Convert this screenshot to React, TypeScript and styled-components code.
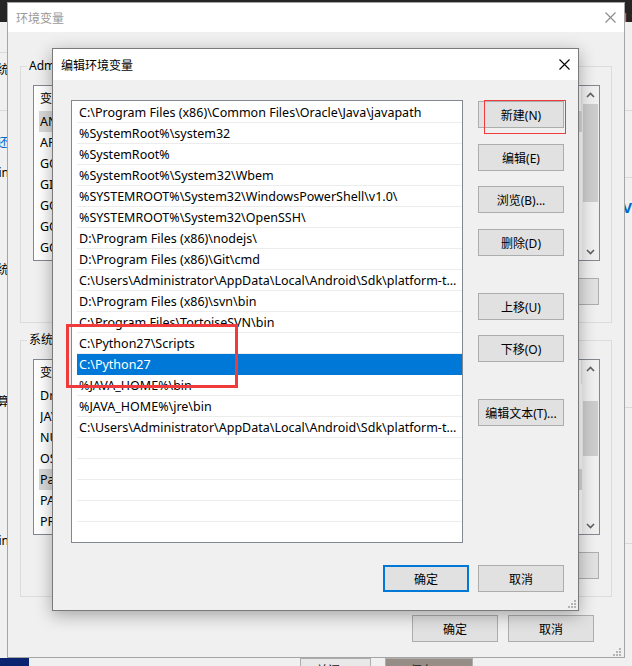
import React from "react";
import styled, { createGlobalStyle } from "styled-components";

const FONT = `"Noto Sans", "Noto Sans CJK SC", sans-serif`;

const GlobalStyle = createGlobalStyle`
  html, body { margin: 0; padding: 0; background: #f0f0f0; }
  body { font-family: ${FONT}; font-size: 12px; }
  * { box-sizing: border-box; }
`;

const Desktop = styled.div`
  position: relative;
  width: 632px;
  height: 666px;
  overflow: hidden;
  background: #f0f0f0;
  font-family: ${FONT};
  font-size: 12px;
  color: #000;
`;

/* ---------- windows on the desktop ---------- */
const Win = styled.div<{ $x: number; $y: number; $w: number; $h: number }>`
  position: absolute;
  left: ${(p) => p.$x}px;
  top: ${(p) => p.$y}px;
  width: ${(p) => p.$w}px;
  height: ${(p) => p.$h}px;
  overflow: hidden;
`;

const EditorWin = styled(Win)`
  background: #252526;
`;

const CodeLine = styled.div`
  margin-top: 12px;
  padding-left: 340px;
  white-space: nowrap;
  font-family: "DejaVu Sans Mono", monospace;
  font-size: 12px;
  line-height: 14px;
  color: #d4d4d4;
`;

const Tok = styled.span<{ $c: string }>`
  color: ${(p) => p.$c};
`;

const SystemWin = styled(Win)`
  background: #f0f0f0;
  display: flex;
  justify-content: space-between;
`;

const SidePane = styled.div<{ $w: number }>`
  width: ${(p) => p.$w}px;
  display: flex;
  flex-direction: column;
  align-items: flex-end;
`;

const SideSep = styled.div<{ $mt: number }>`
  margin-top: ${(p) => p.$mt}px;
  width: 100%;
  height: 1px;
  background: #d9d9d9;
  flex: none;
`;

const SideText = styled.div<{ $mt: number; $color?: string; $bold?: boolean }>`
  margin-top: ${(p) => p.$mt}px;
  line-height: 16px;
  height: 16px;
  white-space: nowrap;
  color: ${(p) => p.$color ?? "#000"};
  font-weight: ${(p) => (p.$bold ? 700 : 400)};
  font-size: ${(p) => (p.$bold ? 15 : 12)}px;
  flex: none;
`;

const BottomStrip = styled(Win)`
  display: flex;
  background: #f0f0f0;
`;

const NavyBlock = styled.div`
  width: 29px;
  background: #0b2470;
`;

const StripButton = styled.div<{ $ml: number; $w: number; $bg: string }>`
  margin-left: ${(p) => p.$ml}px;
  width: ${(p) => p.$w}px;
  height: 20px;
  background: ${(p) => p.$bg};
  border: 1px solid #adadad;
  text-align: center;
  line-height: 18px;
  padding-top: 3px;
  font-size: 12px;
  color: #222;
`;

const DialogWin = styled(Win)<{ $active?: boolean }>`
  background: #f0f0f0;
  border: 1px solid ${(p) => (p.$active ? "#7a7a7a" : "#a5a5a5")};
  display: flex;
  flex-direction: column;
  ${(p) => (p.$active ? "box-shadow: 0 4px 16px rgba(0,0,0,0.32);" : "")}
`;

const TitleBar = styled.div<{ $h: number }>`
  height: ${(p) => p.$h}px;
  flex: none;
  background: #fff;
  display: flex;
  align-items: center;
  justify-content: space-between;
  padding: 0 8px;
`;

const TitleText = styled.div<{ $inactive?: boolean }>`
  font-size: 12px;
  color: ${(p) => (p.$inactive ? "#9a9a9a" : "#000")};
`;

const CloseGlyph = styled.svg`
  display: block;
`;

function CloseIcon({ color }: { color: string }) {
  return (
    <CloseGlyph width="11" height="11" viewBox="0 0 11 11">
      <path d="M0.5 0.5 L10.5 10.5 M10.5 0.5 L0.5 10.5" stroke={color} strokeWidth="1.1" fill="none" />
    </CloseGlyph>
  );
}

const Grip = styled.svg<{ $r: number; $b: number }>`
  position: absolute;
  right: ${(p) => p.$r}px;
  bottom: ${(p) => p.$b}px;
`;

function GripIcon({ r, b }: { r: number; b: number }) {
  return (
    <Grip $r={r} $b={b} width="8" height="8" viewBox="0 0 8 8">
      {[
        [6, 0],
        [3, 3],
        [6, 3],
        [0, 6],
        [3, 6],
        [6, 6],
      ].map(([x, y]) => (
        <rect key={`${x}-${y}`} x={x} y={y} width="2" height="2" fill="#b4b4b4" />
      ))}
    </Grip>
  );
}

/* ---------- buttons ---------- */
const Button = styled.div<{ $default?: boolean; $mt?: number; $w?: number }>`
  width: ${(p) => p.$w ?? 86}px;
  height: 27px;
  flex: none;
  margin-top: ${(p) => p.$mt ?? 0}px;
  background: #e1e1e1;
  border: ${(p) => (p.$default ? "2px solid #0078d7" : "1px solid #adadad")};
  display: flex;
  align-items: center;
  justify-content: center;
  font-size: 12px;
  color: #000;
  white-space: nowrap;
`;

/* ---------- background dialog (环境变量) ---------- */
const BgBody = styled.div`
  flex: 1;
  display: flex;
  flex-direction: column;
  padding: 0 0 0 12px;
`;

const Group = styled.fieldset<{ $mt: number }>`
  margin: ${(p) => p.$mt}px 0 0 0;
  width: 592px;
  padding: 11px 11px 17px 12px;
  border: 1px solid #dcdcdc;
  min-width: 0;
`;

const GroupLabel = styled.legend`
  padding: 0 2px;
  margin-left: -6px;
  font-size: 12px;
  line-height: 16px;
  white-space: nowrap;
`;

const ListView = styled.div`
  width: 567px;
  height: 176px;
  border: 1px solid #828790;
  background: #fff;
  display: flex;
  overflow: hidden;
`;

const LvContent = styled.div`
  flex: 1;
  display: flex;
  flex-direction: column;
  overflow: hidden;
`;

const LvHeader = styled.div`
  height: 25px;
  flex: none;
  display: flex;
  align-items: center;
  padding-left: 6px;
  border-bottom: 1px solid #fff;
`;

const HeaderCell = styled.div<{ $w: number }>`
  width: ${(p) => p.$w}px;
  height: 100%;
  display: flex;
  align-items: center;
  border-right: 1px solid #e5e5e5;
`;

const LvRow = styled.div<{ $sel?: boolean }>`
  height: 21px;
  flex: none;
  margin-left: 5px;
  padding-left: 1px;
  display: flex;
  align-items: center;
  white-space: nowrap;
  font-size: 12.5px;
  background: ${(p) => (p.$sel ? "#d9d9d9" : "transparent")};
`;

const Cell = styled.div<{ $w: number }>`
  width: ${(p) => p.$w}px;
  overflow: hidden;
`;

const ScrollBar = styled.div`
  width: 17px;
  flex: none;
  background: #f0f0f0;
  display: flex;
  flex-direction: column;
`;

const ScrollBtn = styled.div`
  height: 17px;
  flex: none;
  display: flex;
  align-items: center;
  justify-content: center;
`;

const Track = styled.div`
  flex: 1;
  display: flex;
  flex-direction: column;
`;

const Thumb = styled.div<{ $mt: number; $h: number }>`
  margin: ${(p) => p.$mt}px 1px 0 1px;
  height: ${(p) => p.$h}px;
  background: #cdcdcd;
`;

function Chevron({ up }: { up?: boolean }) {
  return (
    <svg width="9" height="6" viewBox="0 0 9 6">
      <path
        d={up ? "M1 5 L4.5 1.5 L8 5" : "M1 1 L4.5 4.5 L8 1"}
        stroke="#606060"
        strokeWidth="1.6"
        fill="none"
      />
    </svg>
  );
}

const GroupButtons = styled.div`
  display: flex;
  justify-content: flex-end;
  gap: 10px;
  margin-top: 17px;
  padding-right: 1px;
`;

const BgFooter = styled.div`
  display: flex;
  justify-content: flex-end;
  gap: 10px;
  margin-top: 18px;
  padding-right: 30px;
`;

type LvProps = {
  names: string[];
  values: string[];
  sel: number;
  thumbTop: number;
  thumbH: number;
};

function EnvListView({ names, values, sel, thumbTop, thumbH }: LvProps) {
  return (
    <ListView>
      <LvContent>
        <LvHeader>
          <HeaderCell $w={150}>变量</HeaderCell>
          <HeaderCell $w={400}>值</HeaderCell>
        </LvHeader>
        {names.map((n, i) => (
          <LvRow key={n + i} $sel={i === sel}>
            <Cell $w={151}>{n}</Cell>
            <Cell $w={390}>{values[i]}</Cell>
          </LvRow>
        ))}
      </LvContent>
      <ScrollBar>
        <ScrollBtn>
          <Chevron up />
        </ScrollBtn>
        <Track>
          <Thumb $mt={thumbTop} $h={thumbH} />
        </Track>
        <ScrollBtn>
          <Chevron />
        </ScrollBtn>
      </ScrollBar>
    </ListView>
  );
}

/* ---------- foreground dialog (编辑环境变量) ---------- */
const FgBody = styled.div`
  flex: 1;
  display: flex;
  flex-direction: column;
  padding: 20px 14px 0 18px;
`;

const FgMain = styled.div`
  display: flex;
  justify-content: space-between;
`;

const PathList = styled.div`
  width: 392px;
  height: 443px;
  border: 1px solid #828790;
  background: #fff;
  padding: 1px 0 0 5px;
  overflow: hidden;
  display: flex;
  flex-direction: column;
`;

const PathRow = styled.div<{ $sel?: boolean }>`
  height: 21px;
  flex: none;
  padding: 1px 0 0 2px;
  line-height: 19px;
  font-size: 12.5px;
  border-bottom: 1px solid ${(p) => (p.$sel ? "#0078d7" : "#ececec")};
  background: ${(p) => (p.$sel ? "#0078d7" : "#fff")};
  color: ${(p) => (p.$sel ? "#fff" : "#000")};
  white-space: nowrap;
  overflow: hidden;
`;

const ButtonColumn = styled.div`
  display: flex;
  flex-direction: column;
`;

const FgFooter = styled.div`
  display: flex;
  justify-content: flex-end;
  gap: 9px;
  margin-top: 22px;
`;

/* ---------- annotation boxes ---------- */
const Annotation = styled.div<{ $x: number; $y: number; $w: number; $h: number; $t: number }>`
  position: absolute;
  left: ${(p) => p.$x}px;
  top: ${(p) => p.$y}px;
  width: ${(p) => p.$w}px;
  height: ${(p) => p.$h}px;
  border: ${(p) => p.$t}px solid #ef3b3b;
  pointer-events: none;
`;

const paths = [
  "C:\\Program Files (x86)\\Common Files\\Oracle\\Java\\javapath",
  "%SystemRoot%\\system32",
  "%SystemRoot%",
  "%SystemRoot%\\System32\\Wbem",
  "%SYSTEMROOT%\\System32\\WindowsPowerShell\\v1.0\\",
  "%SYSTEMROOT%\\System32\\OpenSSH\\",
  "D:\\Program Files (x86)\\nodejs\\",
  "D:\\Program Files (x86)\\Git\\cmd",
  "C:\\Users\\Administrator\\AppData\\Local\\Android\\Sdk\\platform-t...",
  "D:\\Program Files (x86)\\svn\\bin",
  "C:\\Program Files\\TortoiseSVN\\bin",
  "C:\\Python27\\Scripts",
  "C:\\Python27",
  "%JAVA_HOME%\\bin",
  "%JAVA_HOME%\\jre\\bin",
  "C:\\Users\\Administrator\\AppData\\Local\\Android\\Sdk\\platform-t...",
  "",
  "",
  "",
  "",
  "",
];

const userNames = ["ANDROID_HOME", "APPDATA_DIR", "GOPATH", "GIT_HOME", "GOROOT", "GOPROXY", "GO111MODULE"];
const userValues = [
  "C:\\Users\\Administrator\\AppData\\Local\\Android\\Sdk",
  "C:\\Users\\Administrator\\AppData",
  "C:\\Users\\Administrator\\go",
  "D:\\Program Files (x86)\\Git",
  "C:\\Go",
  "https://goproxy.cn",
  "on",
];
const sysNames = ["DriverData", "JAVA_HOME", "NUMBER_OF_PROCESSORS", "OS", "Path", "PATHEXT", "PROCESSOR_ARCHITECTURE"];
const sysValues = [
  "C:\\Windows\\System32\\Drivers\\DriverData",
  "C:\\Program Files\\Java\\jdk1.8.0_201",
  "8",
  "Windows_NT",
  "C:\\Program Files (x86)\\Common Files\\Oracle\\Java\\javapath;...",
  ".COM;.EXE;.BAT;.CMD;.VBS;.VBE;.JS;.JSE;.WSF;.WSH;.MSC",
  "AMD64",
];

export default function App() {
  return (
    <Desktop>
      <GlobalStyle />

      <EditorWin $x={0} $y={0} $w={632} $h={24}>
        <CodeLine>
          <Tok $c="#dcdcaa">console</Tok>
          <Tok $c="#d4d4d4">.</Tok>
          <Tok $c="#c586c0">log</Tok>
          <Tok $c="#d4d4d4">(</Tok>
          <Tok $c="#ce9178">'path'</Tok>
          <Tok $c="#d4d4d4">, </Tok>
          <Tok $c="#dcdcaa">value</Tok>
          <Tok $c="#d4d4d4">) </Tok>
          <Tok $c="#ce9178">'install'</Tok>
          <Tok $c="#d4d4d4"> </Tok>
          <Tok $c="#ce9178">'[|'</Tok>
        </CodeLine>
      </EditorWin>

      <SystemWin $x={-100} $y={22} $w={732} $h={636}>
        <SidePane $w={109}>
          <SideSep $mt={30} />
          <SideText $mt={9}>系统</SideText>
          <SideSep $mt={32} />
          <SideText $mt={24} $color="#0066cc">
            返还
          </SideText>
          <SideText $mt={14}>Admin</SideText>
          <SideText $mt={81}>系统</SideText>
          <SideText $mt={116}>计算</SideText>
          <SideText $mt={123}>Admin</SideText>
        </SidePane>
        <SidePane $w={9}>
          <SideSep $mt={88} />
          <SideSep $mt={66} />
          <SideText $mt={21} $color="#0066cc" $bold>
            V
          </SideText>
          <SideSep $mt={192} />
          <SideSep $mt={135} />
        </SidePane>
      </SystemWin>

      <BottomStrip $x={0} $y={658} $w={632} $h={8}>
        <NavyBlock />
        <StripButton $ml={271} $w={71} $bg="#e8e8e8">
          关闭(C)
        </StripButton>
        <StripButton $ml={14} $w={88} $bg="#978d87">
          保存(S)
        </StripButton>
      </BottomStrip>

      <DialogWin $x={7} $y={2} $w={618} $h={656}>
        <TitleBar $h={29}>
          <TitleText $inactive>环境变量</TitleText>
          <CloseIcon color="#8a8a8a" />
        </TitleBar>
        <BgBody>
          <Group $mt={26}>
            <GroupLabel>Administrator 的用户变量(U)</GroupLabel>
            <EnvListView names={userNames} values={userValues} sel={0} thumbTop={1} thumbH={98} />
            <GroupButtons>
              <Button>新建(N)...</Button>
              <Button>编辑(E)...</Button>
              <Button>删除(D)</Button>
            </GroupButtons>
          </Group>
          <Group $mt={9}>
            <GroupLabel>系统变量(S)</GroupLabel>
            <EnvListView names={sysNames} values={sysValues} sel={4} thumbTop={24} thumbH={55} />
            <GroupButtons>
              <Button>新建(W)...</Button>
              <Button>编辑(I)...</Button>
              <Button>删除(L)</Button>
            </GroupButtons>
          </Group>
          <BgFooter>
            <Button>确定</Button>
            <Button>取消</Button>
          </BgFooter>
        </BgBody>
        <GripIcon r={3} b={1} />
      </DialogWin>

      <DialogWin $x={52} $y={48} $w={527} $h={563} $active>
        <TitleBar $h={31}>
          <TitleText>编辑环境变量</TitleText>
          <CloseIcon color="#000" />
        </TitleBar>
        <FgBody>
          <FgMain>
            <PathList>
              {paths.map((p, i) => (
                <PathRow key={i} $sel={i === 12}>
                  {p}
                </PathRow>
              ))}
            </PathList>
            <ButtonColumn>
              <Button $mt={1}>新建(N)</Button>
              <Button $mt={16}>编辑(E)</Button>
              <Button $mt={15}>浏览(B)...</Button>
              <Button $mt={16}>删除(D)</Button>
              <Button $mt={37}>上移(U)</Button>
              <Button $mt={15}>下移(O)</Button>
              <Button $mt={37}>编辑文本(T)...</Button>
            </ButtonColumn>
          </FgMain>
          <FgFooter>
            <Button $default>确定</Button>
            <Button>取消</Button>
          </FgFooter>
        </FgBody>
        <GripIcon r={2} b={2} />
      </DialogWin>

      <Annotation $x={484} $y={100} $w={82} $h={34} $t={1} />
      <Annotation $x={66} $y={324} $w={172} $h={64} $t={3} />
    </Desktop>
  );
}
